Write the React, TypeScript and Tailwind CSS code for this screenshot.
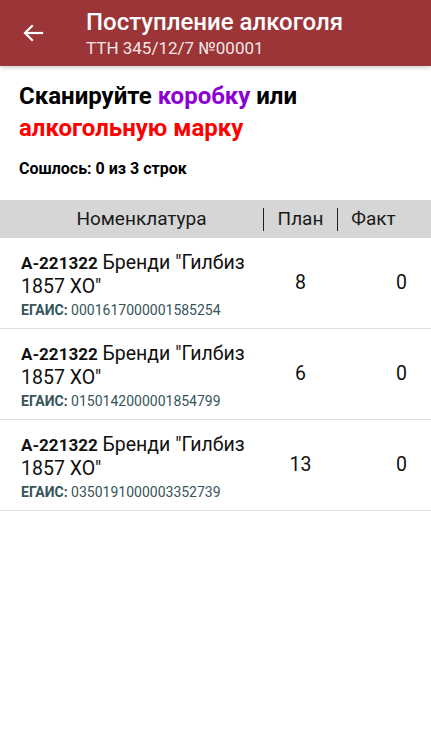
import React from 'react';

const rows = [
  { code: 'А-221322', name: 'Бренди "Гилбиз 1857 XO"', egais: '0001617000001585254', plan: 8, fact: 0 },
  { code: 'А-221322', name: 'Бренди "Гилбиз 1857 XO"', egais: '0150142000001854799', plan: 6, fact: 0 },
  { code: 'А-221322', name: 'Бренди "Гилбиз 1857 XO"', egais: '0350191000003352739', plan: 13, fact: 0 },
];

export default function App() {
  return (
    <div className="w-[431px] h-[739px] bg-white overflow-hidden font-['Roboto',sans-serif]">
      {/* App bar */}
      <div className="relative z-10 h-[66px] bg-[#9b3537] flex items-center shadow-[0_2px_4px_rgba(0,0,0,0.18)]">
        <div className="w-[86px] pl-[21px] pb-[1px]">
          <svg width="24" height="24" viewBox="0 0 24 24" fill="none" stroke="white" strokeWidth="2.2" strokeLinecap="square">
            <path d="M21 12H5" />
            <path d="M11 5l-7 7 7 7" />
          </svg>
        </div>
        <div className="flex flex-col text-white">
          <span className="text-[24px] font-medium leading-[28px]">Поступление алкоголя</span>
          <span className="text-[17px] leading-[20px] mt-[2px] text-[#f3e5e5]">ТТН 345/12/7 №00001</span>
        </div>
      </div>

      {/* Prompt */}
      <div className="px-[19px] pt-[14px]">
        <div className="text-[24px] font-bold leading-[32px] text-black">
          Сканируйте <span className="text-[#8b00d4]">коробку</span> или
          <br />
          <span className="text-[#ff0000]">алкогольную марку</span>
        </div>
        <div className="text-[16px] font-bold text-black mt-[15px] leading-[20px]">Сошлось: 0 из 3 строк</div>
      </div>

      {/* Table header */}
      <div className="mt-[21px] h-[38px] bg-[#d6d6d6] flex items-center text-[19px] text-[#1a1a1a]">
        <div className="w-[263px] text-center pl-[20px]">Номенклатура</div>
        <div className="w-px h-[23px] bg-[#222]" />
        <div className="w-[73px] text-center">План</div>
        <div className="w-px h-[23px] bg-[#222]" />
        <div className="flex-1 text-center pr-[22px]">Факт</div>
      </div>

      {/* Rows */}
      {rows.map((r, i) => (
        <div key={i} className="h-[91px] border-b border-[#e0e0e0] flex items-center">
          <div className="w-[264px] pl-[21px] pt-[3px]">
            <div className="text-[19.5px] leading-[23px] text-[#111]">
              <span className="font-bold text-[17px]">{r.code}</span> {r.name}
            </div>
            <div className="text-[14px] leading-[18px] text-[#37545a] mt-[3px]">
              <span className="font-bold">ЕГАИС:</span> {r.egais}
            </div>
          </div>
          <div className="w-[73px] text-center text-[19.5px] text-[#111]">{r.plan}</div>
          <div className="flex-1 text-right pr-[24px] text-[19.5px] text-[#111]">{r.fact}</div>
        </div>
      ))}
    </div>
  );
}
